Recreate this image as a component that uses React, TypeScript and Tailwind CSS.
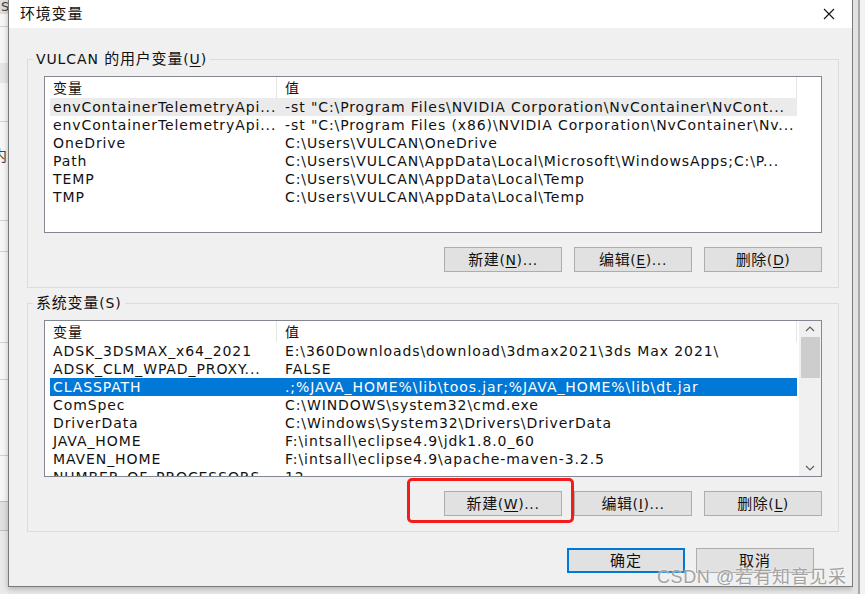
import React from 'react';

type Row = [string, string];

const userRows: Row[] = [
  ['envContainerTelemetryApi...', '-st "C:\\Program Files\\NVIDIA Corporation\\NvContainer\\NvCont...'],
  ['envContainerTelemetryApi...', '-st "C:\\Program Files (x86)\\NVIDIA Corporation\\NvContainer\\Nv...'],
  ['OneDrive', 'C:\\Users\\VULCAN\\OneDrive'],
  ['Path', 'C:\\Users\\VULCAN\\AppData\\Local\\Microsoft\\WindowsApps;C:\\P...'],
  ['TEMP', 'C:\\Users\\VULCAN\\AppData\\Local\\Temp'],
  ['TMP', 'C:\\Users\\VULCAN\\AppData\\Local\\Temp'],
];

const systemRows: Row[] = [
  ['ADSK_3DSMAX_x64_2021', 'E:\\360Downloads\\download\\3dmax2021\\3ds Max 2021\\'],
  ['ADSK_CLM_WPAD_PROXY...', 'FALSE'],
  ['CLASSPATH', '.;%JAVA_HOME%\\lib\\toos.jar;%JAVA_HOME%\\lib\\dt.jar'],
  ['ComSpec', 'C:\\WINDOWS\\system32\\cmd.exe'],
  ['DriverData', 'C:\\Windows\\System32\\Drivers\\DriverData'],
  ['JAVA_HOME', 'F:\\intsall\\eclipse4.9\\jdk1.8.0_60'],
  ['MAVEN_HOME', 'F:\\intsall\\eclipse4.9\\apache-maven-3.2.5'],
  ['NUMBER_OF_PROCESSORS', '12'],
];

export default function App() {
  return (
    <div className="relative w-[865px] h-[594px] overflow-hidden flex bg-[#e9e9e9] text-[14px] leading-[18px] tracking-[0.9px] text-[#111] font-['DejaVu_Sans','Noto_Sans_CJK_SC',sans-serif]">
      <BehindLeft />

      {/* 环境变量 对话框 */}
      <div className="w-[845px] h-[587px] shrink-0 flex flex-col bg-[#f0f0f0] border-x border-b border-[#7a7a7a] shadow-[0_2px_6px_rgba(0,0,0,0.25)]">
        <div className="h-[28px] shrink-0 bg-white flex items-center justify-between pl-[11px] pr-[15px]">
          <span className="text-[15px] tracking-[0.8px]">环境变量</span>
          <svg width="12" height="12" viewBox="0 0 12 12" className="mr-[2px]">
            <path d="M1 1 L11 11 M11 1 L1 11" stroke="#111" strokeWidth="1.1" />
          </svg>
        </div>

        <div className="flex flex-col pt-[22px] pl-[18px] pr-[14px]">
          <GroupBox
            label={<>VULCAN <span className="text-[15px] tracking-[0.8px]">的用户变量</span>(<u className="underline-offset-2">U</u>)</>}
          >
            <ListView rows={userRows} selected={0} tone="gray" />
            <ButtonRow keys={['N', 'E', 'D']} />
          </GroupBox>

          <div className="h-[6px]" />

          <GroupBox label={<><span className="text-[15px] tracking-[0.8px]">系统变量</span>(S)</>}>
            <ListView rows={systemRows} selected={2} tone="blue" scrollbar />
            <ButtonRow keys={['W', 'I', 'L']} />
          </GroupBox>

          <div className="flex justify-end gap-[11px] mt-[16px] pr-[24px]">
            <button className="w-[118px] h-[25px] bg-[#e1e1e1] border-2 border-[#0078d7] text-[15px]">确定</button>
            <button className="w-[118px] h-[25px] bg-[#e1e1e1] border border-[#adadad] text-[15px]">取消</button>
          </div>
        </div>
      </div>

      <BehindRight />

      {/* 标注框 */}
      <div className="absolute left-[407px] top-[478px] w-[167px] h-[45px] border-[3px] border-[#f51b1b] rounded-[5px]" />

      {/* 水印 */}
      <div className="absolute left-[657px] top-[566px] text-[18px] leading-[22px] tracking-[0.6px] text-[#a2a2a2] font-['Liberation_Sans','Noto_Sans_CJK_SC',sans-serif] [text-shadow:0_0_2px_#fff]">
        CSDN @若有知音见采
      </div>
    </div>
  );
}

function GroupBox({ label, children }: { label: React.ReactNode; children: React.ReactNode }) {
  return (
    <fieldset className="w-[812px] border border-[#dcdcdc] px-[16px] pt-[8px] pb-[15px]">
      <legend className="-ml-[11px] px-[3px] h-[18px]">{label}</legend>
      {children}
    </fieldset>
  );
}

function ButtonRow({ keys }: { keys: [string, string, string] }) {
  const labels = ['新建', '编辑', '删除'];
  return (
    <div className="flex justify-end gap-[12px] mt-[14px] tracking-[0.6px]">
      {labels.map((l, i) => (
        <button key={l} className="w-[118px] h-[25px] bg-[#e1e1e1] border border-[#adadad]">
          <span className="text-[15px]">{l}</span>(<u className="underline-offset-2">{keys[i]}</u>){i < 2 ? '...' : ''}
        </button>
      ))}
    </div>
  );
}

function ListView({
  rows,
  selected,
  tone,
  scrollbar,
}: {
  rows: Row[];
  selected: number;
  tone: 'gray' | 'blue';
  scrollbar?: boolean;
}) {
  return (
    <div className="w-[778px] h-[157px] bg-white border border-[#828790] flex overflow-hidden">
      <div className="flex-1 min-w-0 overflow-hidden">
        <div className="flex h-[21px] ml-[5px] items-center">
          <div className="w-[227px] h-full pl-[3px] flex items-center border-r border-[#e5e5e5]">变量</div>
          <div className="w-[520px] h-full pl-[8px] flex items-center border-r border-[#e5e5e5]">值</div>
        </div>
        {rows.map(([k, v], i) => {
          const sel = i === selected;
          const bg = sel ? (tone === 'blue' ? 'bg-[#0078d7] text-white' : 'bg-[#ebebeb]') : '';
          return (
            <div key={i} className={`flex h-[18px] w-[747px] ml-[5px] ${bg}`}>
              <div className="w-[227px] pl-[3px] whitespace-nowrap overflow-hidden">{k}</div>
              <div className="w-[520px] pl-[8px] whitespace-nowrap overflow-hidden">{v}</div>
            </div>
          );
        })}
      </div>
      {scrollbar && (
        <div className="w-[22px] shrink-0 bg-[#f0f0f0] flex flex-col items-center">
          <div className="h-[16px] w-full flex items-center justify-center">
            <svg width="10" height="6" viewBox="0 0 10 6">
              <path d="M1 5 L5 1 L9 5" fill="none" stroke="#606060" strokeWidth="1.2" />
            </svg>
          </div>
          <div className="w-[19px] h-[41px] bg-[#cdcdcd]" />
          <div className="flex-1" />
          <div className="h-[16px] w-full flex items-center justify-center">
            <svg width="10" height="6" viewBox="0 0 10 6">
              <path d="M1 1 L5 5 L9 1" fill="none" stroke="#606060" strokeWidth="1.2" />
            </svg>
          </div>
        </div>
      )}
    </div>
  );
}

// 背后窗口露出的左边一条
function BehindLeft() {
  return (
    <div className="w-[8px] h-full shrink-0 overflow-hidden flex flex-col bg-[#f7f7f7] text-[#444]">
      <div className="h-[14px] bg-[#dedede] text-[13px] leading-[14px] pl-[1px] overflow-hidden">S</div>
      <div className="h-[12px]" />
      <div className="h-[1px] bg-[#d0d0d0]" />
      <div className="h-[36px]" />
      <div className="h-[20px] bg-[#e6e6e6]" />
      <div className="h-[38px]" />
      <div className="h-[1px] bg-[#d0d0d0]" />
      <div className="h-[25px]" />
      <div className="h-[18px] text-[15px] leading-[18px] -ml-[8px] overflow-hidden whitespace-nowrap">内</div>
      <div className="h-[55px]" />
      <div className="h-[1px] bg-[#d0d0d0]" />
      <div className="h-[30px]" />
      <div className="h-[1px] bg-[#d0d0d0]" />
      <div className="h-[90px]" />
      <div className="h-[1px] bg-[#d0d0d0]" />
      <div className="h-[36px]" />
      <div className="h-[1px] bg-[#d0d0d0]" />
      <div className="h-[75px]" />
      <div className="h-[1px] bg-[#d0d0d0]" />
      <div className="h-[45px]" />
      <div className="h-[30px] bg-[#e1e1e1] border-y border-[#bdbdbd]" />
      <div className="flex-1 bg-[#eaeaea]" />
    </div>
  );
}

function BehindRight() {
  return (
    <div className="flex-1 h-full flex bg-[#ececec]">
      <div className="w-[5px] h-full bg-[#e2e2e2]" />
      <div className="w-[2px] h-full bg-[#a9a9a9]" />
      <div className="flex-1 h-full bg-[#f2f2f2]" />
    </div>
  );
}
